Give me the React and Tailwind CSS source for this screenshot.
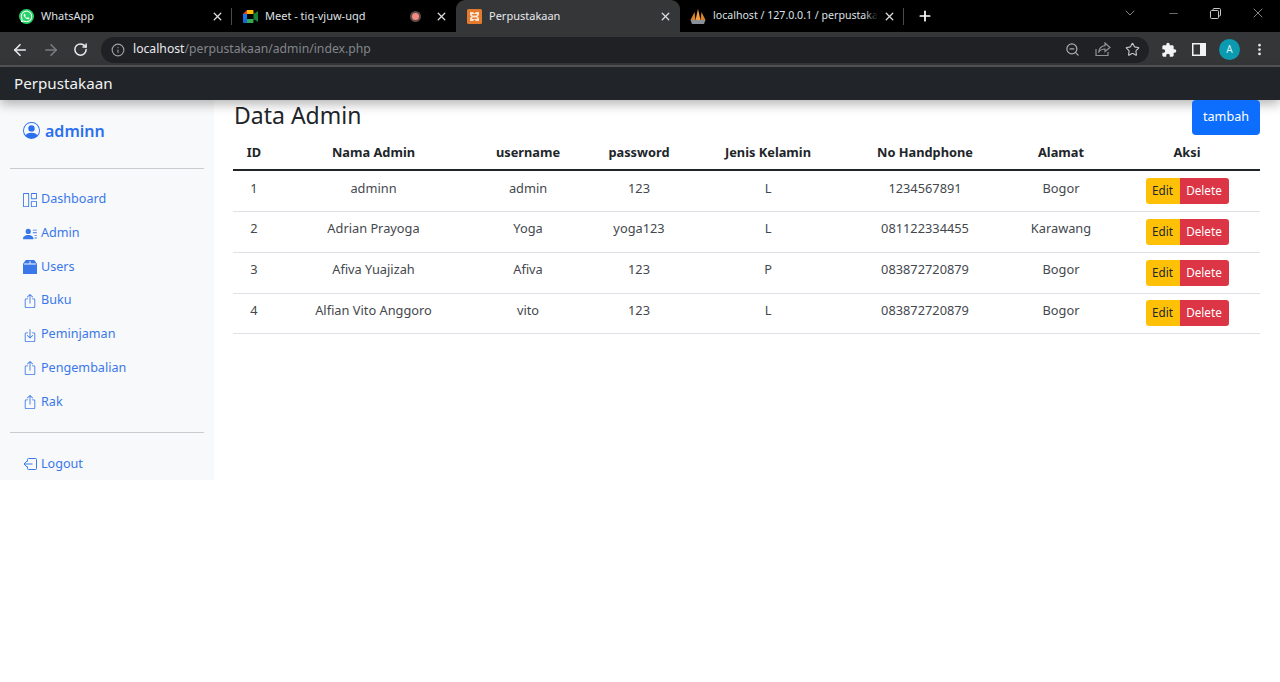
import { ArrowLeft, ArrowRight, RotateCw, Info, ZoomOut, Star, X, Plus, ChevronDown, Minus, MoreVertical } from 'lucide-react';
import { FaWhatsapp } from 'react-icons/fa';
import { MdExtension } from 'react-icons/md';
import { BsPersonCircle, BsGrid1X2, BsPersonLinesFill, BsBox2Fill, BsBoxArrowUp, BsBoxArrowInDown } from 'react-icons/bs';

const admins = [
  { id: 1, nama: 'adminn', user: 'admin', pass: '123', jk: 'L', hp: '1234567891', alamat: 'Bogor' },
  { id: 2, nama: 'Adrian Prayoga', user: 'Yoga', pass: 'yoga123', jk: 'L', hp: '081122334455', alamat: 'Karawang' },
  { id: 3, nama: 'Afiva Yuajizah', user: 'Afiva', pass: '123', jk: 'P', hp: '083872720879', alamat: 'Bogor' },
  { id: 4, nama: 'Alfian Vito Anggoro', user: 'vito', pass: '123', jk: 'L', hp: '083872720879', alamat: 'Bogor' },
];

const menu = [
  { label: 'Dashboard', icon: BsGrid1X2 },
  { label: 'Admin', icon: BsPersonLinesFill },
  { label: 'Users', icon: BsBox2Fill },
  { label: 'Buku', icon: BsBoxArrowUp },
  { label: 'Peminjaman', icon: BsBoxArrowInDown },
  { label: 'Pengembalian', icon: BsBoxArrowUp },
  { label: 'Rak', icon: BsBoxArrowUp },
];

function MeetIcon() {
  return (
    <svg width="15" height="13" viewBox="0 0 15 13">
      <path d="M0 4 L4 0 H4 V4 Z" fill="#ea4335" />
      <path d="M4 0 H9.5 Q10.5 0 10.5 1 V4 H4 Z" fill="#fbbc04" />
      <path d="M0 4 H4 V9 H0 Z" fill="#1a73e8" />
      <path d="M0 9 H4 V13 H1 Q0 13 0 12 Z" fill="#1967d2" />
      <path d="M4 9 H10.5 V12 Q10.5 13 9.5 13 H4 Z" fill="#34a853" />
      <path d="M10.5 4 V9 L15 12 V1 Z" fill="#188038" />
    </svg>
  );
}

function XamppIcon() {
  return (
    <svg width="15" height="15" viewBox="0 0 15 15">
      <rect width="15" height="15" rx="1.5" fill="#e47a2e" />
      <path d="M3.5 3 H6 L7.5 4.5 L9 3 H11.5 Q12 3 12 3.5 V6 L10.5 7.5 L12 9 V11.5 Q12 12 11.5 12 H9 L7.5 10.5 L6 12 H3.5 Q3 12 3 11.5 V9 L4.5 7.5 L3 6 V3.5 Q3 3 3.5 3 Z" fill="#fbe3cf" />
      <rect x="5" y="5" width="5" height="1.4" rx="0.7" fill="#e47a2e" />
      <rect x="5" y="8.6" width="5" height="1.4" rx="0.7" fill="#e47a2e" />
    </svg>
  );
}

function PmaIcon() {
  return (
    <svg width="16" height="15" viewBox="0 0 16 15">
      <path d="M0.5 11 L4.5 3 L5.5 11 Z" fill="#d9822b" />
      <path d="M5.5 11 L8 0 L10.5 11 Z" fill="#f0a040" />
      <path d="M10.5 11 L11.5 3 L15.5 11 Z" fill="#d9822b" />
      <path d="M0.5 11 H15.5 L14 15 H2 Z" fill="#8a8f99" />
    </svg>
  );
}

function LogoutIcon() {
  return (
    <svg width="14" height="12" viewBox="0 0 14 12" fill="none" stroke="currentColor" strokeWidth="1">
      <path d="M4.5 3.5 V1.5 Q4.5 0.5 5.5 0.5 H12.5 Q13.5 0.5 13.5 1.5 V10.5 Q13.5 11.5 12.5 11.5 H5.5 Q4.5 11.5 4.5 10.5 V8.5" />
      <path d="M9.5 6 H1 M4 3 L1 6 L4 9" />
    </svg>
  );
}

function Tab({ icon, title, active, rec, fade, sep }) {
  return (
    <div className={`relative flex items-center w-[224px] pl-[10px] pr-[8px] ${active ? 'h-[35px] pb-[3px] bg-[#353638] rounded-t-[9px]' : 'h-[32px]'}`}>
      <span className="w-[16px] h-[16px] flex items-center justify-center shrink-0">{icon}</span>
      <span className={`ml-[7px] flex-1 whitespace-nowrap ${fade ? 'text-[10.6px]' : 'text-[11px]'} ${active ? 'text-[#e8eaed]' : 'text-[#dfe1e5]'}`}>{title}</span>
      {fade && <span className="absolute right-[26px] top-0 w-[14px] h-full bg-gradient-to-r from-transparent to-black" />}
      {rec && <span className="w-[11px] h-[11px] rounded-full bg-[#f28b82] border-2 border-[#5f4a4a] mr-[14px]" />}
      <X size={13} strokeWidth={2.4} className="text-[#dadce0] shrink-0" />
      {sep && <span className="absolute right-0 top-[8px] w-px h-[17px] bg-[#4a4a4c]" />}
    </div>
  );
}

function BrowserChrome() {
  return (
    <div className="bg-[#353638]">
      <div className="h-[32px] bg-black flex items-start pl-[8px]">
        <Tab icon={<span className="w-[15px] h-[15px] rounded-full bg-[#25d366] flex items-center justify-center"><FaWhatsapp size={13} className="text-white" /></span>} title="WhatsApp" sep />
        <Tab icon={<MeetIcon />} title="Meet - tiq-vjuw-uqd" rec />
        <Tab icon={<XamppIcon />} title="Perpustakaan" active />
        <Tab icon={<PmaIcon />} title="localhost / 127.0.0.1 / perpustaka" fade sep />
        <Plus size={16} strokeWidth={2.6} className="text-white ml-[13px] mt-[8px]" />
        <div className="ml-auto flex items-center h-[26px] text-[#c8c8c8]">
          <ChevronDown size={16} strokeWidth={1} className="mr-[29px]" />
          <Minus size={13} strokeWidth={1} className="mr-[30px]" />
          <svg width="11" height="11" viewBox="0 0 11 11" fill="none" stroke="currentColor" className="mr-[29px]">
            <rect x="0.5" y="2.5" width="8" height="8" rx="1" />
            <path d="M3 2.5 V1.5 Q3 0.5 4 0.5 H9.5 Q10.5 0.5 10.5 1.5 V7 Q10.5 8 9.5 8 H8.5" />
          </svg>
          <X size={16} strokeWidth={1} className="mr-[14px]" />
        </div>
      </div>
      <div className="h-[33px] flex items-center pt-[2px]">
        <ArrowLeft size={18} strokeWidth={2.2} className="text-[#e8eaed] ml-[11px]" />
        <ArrowRight size={18} strokeWidth={2.2} className="text-[#7a7c7f] ml-[13px]" />
        <RotateCw size={15} strokeWidth={2.4} className="text-[#e8eaed] ml-[13px]" />
        <div className="ml-[13px] w-[1048px] h-[26px] rounded-full bg-[#202124] flex items-center pl-[10px] pr-[9px]">
          <Info size={14} className="text-[#9aa0a6]" />
          <span className="ml-[8px] text-[12.2px] text-[#e8eaed]">localhost<span className="text-[#80868b]">/perpustakaan/admin/index.php</span></span>
          <ZoomOut size={15} className="ml-auto text-[#a8abaf]" />
          <svg width="16" height="15" viewBox="0 0 16 15" fill="none" stroke="#8f9296" strokeWidth="1.2" className="ml-[15px]">
            <path d="M1 7 V13.5 H13 V10" />
            <path d="M10 1 L15 5.5 L10 9.5 V7 C7 7 5 8 3.5 10.5 C4 6.5 6.5 4 10 3.6 Z" />
          </svg>
          <Star size={15} strokeWidth={1.8} className="ml-[14px] text-[#c4c7c5]" />
        </div>
        <MdExtension size={16} className="text-[#f1f3f4] ml-[12px]" />
        <svg width="14" height="13" viewBox="0 0 14 13" className="ml-[15px]">
          <rect width="14" height="13" fill="#f1f3f4" />
          <rect x="1.5" y="1.5" width="6.5" height="10" fill="#353638" />
        </svg>
        <span className="ml-[13px] w-[21px] h-[21px] rounded-full bg-[#0b9ab0] text-[#d5f3f7] text-[10px] flex items-center justify-center">A</span>
        <MoreVertical size={15} strokeWidth={2.4} className="text-[#e8eaed] ml-[12px]" />
      </div>
      <div className="h-[2px] bg-[#55565a]" />
    </div>
  );
}

function Sidebar() {
  return (
    <aside className="w-[214px] h-[380px] shrink-0 bg-[#f8f9fa] px-[10px] text-[#3a78ea]">
      <div className="flex gap-[5px] pl-[13px] pt-[21px] h-[68px] items-start text-[#2b70ef]">
        <BsPersonCircle size={17} className="mt-[1px]" />
        <span className="text-[16px] font-semibold leading-[20px]">adminn</span>
      </div>
      <div className="h-px bg-[#c9cbce]" />
      <nav className="pt-[14px] pb-[13px]">
        {menu.map(m => {
          const Icon = m.icon;
          return (
            <div key={m.label} className="h-[33.7px] pl-[13px] flex items-center gap-[4px] text-[12.6px]">
              <Icon size={14} />
              <span>{m.label}</span>
            </div>
          );
        })}
      </nav>
      <div className="h-px bg-[#c9cbce]" />
      <div className="h-[60px] pl-[13px] pt-[3px] flex items-center gap-[4px] text-[12.6px]">
        <LogoutIcon />
        <span>Logout</span>
      </div>
    </aside>
  );
}

function AdminTable() {
  return (
    <table className="w-[1027px] table-fixed border-collapse text-[12.8px] text-[#212529]">
      <colgroup>
        <col className="w-[42px]" />
        <col className="w-[197px]" />
        <col className="w-[112px]" />
        <col className="w-[110px]" />
        <col className="w-[148px]" />
        <col className="w-[166px]" />
        <col className="w-[106px]" />
        <col className="w-[146px]" />
      </colgroup>
      <thead>
        <tr className="h-[33px] border-b-2 border-[#212529]">
          {['ID', 'Nama Admin', 'username', 'password', 'Jenis Kelamin', 'No Handphone', 'Alamat', 'Aksi'].map(h => (
            <th key={h} className="text-center font-bold">{h}</th>
          ))}
        </tr>
      </thead>
      <tbody>
        {admins.map(a => (
          <tr key={a.id} className="h-[41px] last:h-[40px] border-b border-[#dee2e6] text-center text-[#44484d]">
            {[a.id, a.nama, a.user, a.pass, a.jk, a.hp, a.alamat].map((v, i) => (
              <td key={i} className="pb-[5px]">{v}</td>
            ))}
            <td>
              <div className="flex justify-center text-[11.7px]">
                <span className="h-[26px] w-[34px] bg-[#ffc107] text-[#212529] rounded-l-[3px] flex items-center justify-center">Edit</span>
                <span className="h-[26px] w-[49px] bg-[#dc3545] text-white rounded-r-[3px] flex items-center justify-center">Delete</span>
              </div>
            </td>
          </tr>
        ))}
      </tbody>
    </table>
  );
}

export default function App() {
  return (
    <div className="min-h-[682px] bg-white font-['Noto_Sans','Open_Sans',sans-serif]">
      <BrowserChrome />
      <div className="relative z-10 h-[33px] bg-[#212529] flex items-center pl-[14px] text-[15.2px] text-[#f1f2f3] shadow-[0_4px_12px_rgba(0,0,0,0.3)]">Perpustakaan</div>
      <div className="flex">
        <Sidebar />
        <main className="w-[1046px] pl-[19px]">
          <div className="h-[37px] flex justify-between items-start">
            <h1 className="text-[23px] font-normal leading-[30px] pl-[1px] text-[#212529]">Data Admin</h1>
            <button className="relative z-20 w-[68px] h-[35px] bg-[#0d6efd] text-white text-[12.6px] rounded-[4px]">tambah</button>
          </div>
          <AdminTable />
        </main>
      </div>
    </div>
  );
}
